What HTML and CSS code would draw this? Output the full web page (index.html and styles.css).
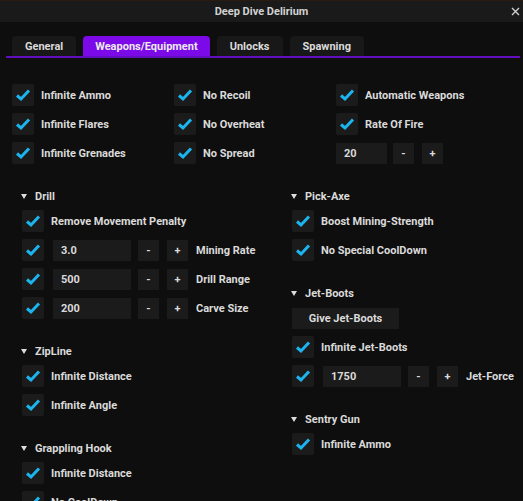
FILE: index.html
```html
<!DOCTYPE html>
<html lang="en">

<head>
    <meta charset="UTF-8">
    <title>Deep Dive Delirium</title>
    <link rel="stylesheet" href="styles.css">
</head>

<body>
    <div class="window">
        <div class="titlebar">
            <span class="title">Deep Dive Delirium</span>
            <span class="close">
                <svg width="9" height="9" viewBox="0 0 9 9"><path d="M1 1L8 8M8 1L1 8" stroke="#cfcfcf" stroke-width="1.4"/></svg>
            </span>
        </div>
        <div class="tabs">
            <div class="tab">General</div>
            <div class="tab active">Weapons/Equipment</div>
            <div class="tab">Unlocks</div>
            <div class="tab">Spawning</div>
        </div>

        <div class="topGrid">
            <div class="item"><span class="check"></span>Infinite Ammo</div>
            <div class="item"><span class="check"></span>No Recoil</div>
            <div class="item"><span class="check"></span>Automatic Weapons</div>
            <div class="item"><span class="check"></span>Infinite Flares</div>
            <div class="item"><span class="check"></span>No Overheat</div>
            <div class="item"><span class="check"></span>Rate Of Fire</div>
            <div class="item"><span class="check"></span>Infinite Grenades</div>
            <div class="item"><span class="check"></span>No Spread</div>
            <div class="item"><span class="field small">20</span><span class="btn">-</span><span class="btn">+</span></div>
        </div>

        <div class="columns">
            <div class="col">
                <div class="section">
                    <div class="header"><span class="arrow"></span>Drill</div>
                    <div class="item"><span class="check"></span>Remove Movement Penalty</div>
                    <div class="item"><span class="check"></span><span class="field">3.0</span><span class="btn">-</span><span class="btn">+</span>Mining Rate</div>
                    <div class="item"><span class="check"></span><span class="field">500</span><span class="btn">-</span><span class="btn">+</span>Drill Range</div>
                    <div class="item"><span class="check"></span><span class="field">200</span><span class="btn">-</span><span class="btn">+</span>Carve Size</div>
                </div>
                <div class="section">
                    <div class="header"><span class="arrow"></span>ZipLine</div>
                    <div class="item"><span class="check"></span>Infinite Distance</div>
                    <div class="item"><span class="check"></span>Infinite Angle</div>
                </div>
                <div class="section">
                    <div class="header"><span class="arrow"></span>Grappling Hook</div>
                    <div class="item"><span class="check"></span>Infinite Distance</div>
                    <div class="item"><span class="check"></span>No CoolDown</div>
                </div>
            </div>
            <div class="col">
                <div class="section">
                    <div class="header"><span class="arrow"></span>Pick-Axe</div>
                    <div class="item"><span class="check"></span>Boost Mining-Strength</div>
                    <div class="item"><span class="check"></span>No Special CoolDown</div>
                </div>
                <div class="section">
                    <div class="header"><span class="arrow"></span>Jet-Boots</div>
                    <div class="item"><span class="btn wide">Give Jet-Boots</span></div>
                    <div class="item"><span class="check"></span>Infinite Jet-Boots</div>
                    <div class="item"><span class="check"></span><span class="field">1750</span><span class="btn">-</span><span class="btn">+</span>Jet-Force</div>
                </div>
                <div class="section">
                    <div class="header"><span class="arrow"></span>Sentry Gun</div>
                    <div class="item"><span class="check"></span>Infinite Ammo</div>
                </div>
            </div>
        </div>
    </div>
</body>

</html>
```

FILE: styles.css
```css
html,
body {
    margin: 0;
    background-color: rgb(14, 14, 14);
}

.window {
    width: 523px;
    height: 501px;
    overflow: hidden;
    background-color: rgb(14, 14, 14);
    color: rgb(218, 218, 218);
    font-family: Roboto, "Liberation Sans", sans-serif;
    font-size: 11px;
    font-weight: bold;
}

.titlebar {
    height: 21px;
    border-top: 1px solid rgb(40, 28, 18);
    background-color: rgb(26, 26, 26);
    display: flex;
    align-items: center;
    justify-content: center;
    position: relative;
}

.title {
    color: rgb(210, 210, 210);
}

.close {
    position: absolute;
    right: 3px;
    top: 6px;
    display: flex;
}

.tabs {
    display: flex;
    gap: 7px;
    margin: 14px 3px 0 6px;
    padding-left: 6px;
    border-bottom: 2px solid rgb(98, 14, 190);
}

.tab {
    height: 20px;
    padding: 0 13px;
    display: flex;
    align-items: center;
    background-color: rgb(24, 24, 24);
    border-radius: 4px 4px 0 0;
}

.tab.active {
    padding: 0 12px;
    background-color: rgb(124, 10, 232);
    color: rgb(235, 235, 235);
}

.topGrid {
    display: grid;
    grid-template-columns: 162px 162px auto;
    row-gap: 7px;
    margin: 26px 0 0 12px;
}

.item {
    height: 22px;
    display: flex;
    align-items: center;
    gap: 7px;
}

.check {
    width: 22px;
    height: 22px;
    flex: none;
    background-color: rgb(27, 27, 27);
    border-radius: 2px;
    background-image: url("data:image/svg+xml;utf8,<svg xmlns='http://www.w3.org/2000/svg' width='22' height='22'><path d='M5 11.5L9 15L17 6.5' fill='none' stroke='%231cb4ee' stroke-width='3'/></svg>");
}

.field {
    width: 70px;
    height: 21px;
    padding-left: 8px;
    flex: none;
    display: flex;
    align-items: center;
    background-color: rgb(27, 27, 27);
    margin-left: 2px;
}

.field.small {
    width: 43px;
    margin-left: 0;
    margin-right: -1px;
}

.btn {
    width: 21px;
    height: 21px;
    flex: none;
    display: flex;
    align-items: center;
    justify-content: center;
    background-color: rgb(27, 27, 27);
    margin-right: 1px;
}

.btn.wide {
    width: 107px;
}

.columns {
    display: grid;
    grid-template-columns: 270px auto;
    margin: 25px 0 0 22px;
}

.section {
    display: flex;
    flex-direction: column;
    gap: 7px;
    margin-bottom: 25px;
}

.header {
    height: 14px;
    display: flex;
    align-items: center;
    gap: 8px;
}

.arrow {
    width: 0;
    height: 0;
    margin-left: -1px;
    border-left: 3px solid transparent;
    border-right: 3px solid transparent;
    border-top: 5px solid rgb(220, 220, 220);
}
```
